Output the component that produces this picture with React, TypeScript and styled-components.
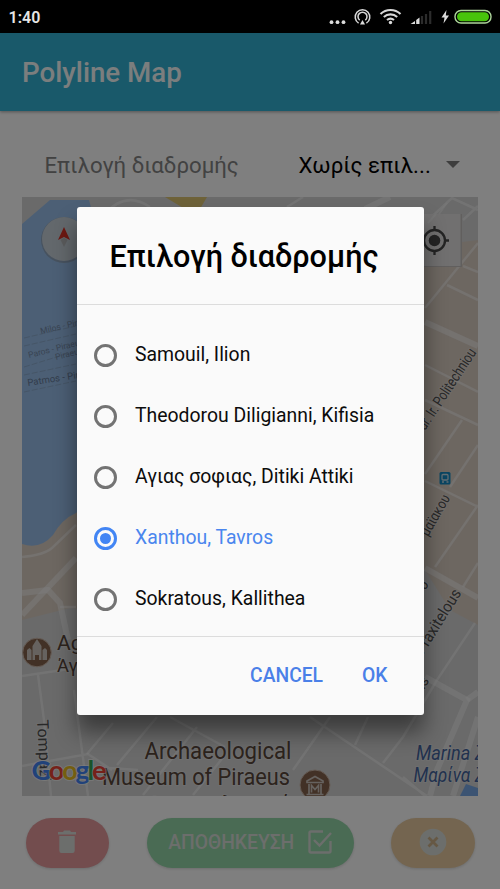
import React, { useState } from "react";
import styled, { createGlobalStyle } from "styled-components";

const GlobalStyle = createGlobalStyle`
  * { box-sizing: border-box; }
  body {
    margin: 0;
    overflow: hidden;
    font-family: Roboto, "Noto Sans", sans-serif;
    background: #fff;
  }
  button { font-family: inherit; border: 0; padding: 0; cursor: pointer; }
  svg { display: block; }
`;

const Screen = styled.div`
  position: relative;
  width: 500px;
  height: 889px;
  display: flex;
  flex-direction: column;
  overflow: hidden;
`;

const StatusBar = styled.div`
  display: flex;
  justify-content: space-between;
  height: 33px;
  flex: none;
  background: #000;
  color: #e6e6e6;
  position: relative;
  z-index: 2;
`;

const Clock = styled.span`
  padding-left: 8.5px;
  font-size: 16px;
  font-weight: 600;
  line-height: 36px;
`;

const Toolbar = styled.header`
  display: flex;
  align-items: center;
  height: 78px;
  flex: none;
  padding: 2px 0 0 22px;
  background: #32b3d5;
  box-shadow: 0 1px 3px rgba(0, 0, 0, 0.35);
`;

const Title = styled.h1`
  margin: 0;
  font-size: 27.7px;
  font-weight: 500;
  line-height: 36px;
  color: #fff;
  opacity: 0.96;
`;

const Content = styled.main`
  display: flex;
  flex-direction: column;
  padding: 0 22px;
`;

const SelectRow = styled.div`
  display: flex;
  align-items: center;
  height: 86px;
  padding: 21px 18.5px 0 22.5px;
`;

const SelectLabel = styled.span`
  flex: none;
  width: 254px;
  font-size: 22.2px;
  color: #848484;
`;

const SelectValue = styled.span`
  flex: 1;
  font-size: 22.3px;
  white-space: nowrap;
`;

const Caret = styled.i`
  border: 7px solid transparent;
  border-top-color: #7d7d7d;
  border-bottom: 0;
`;

const MapFrame = styled.div`
  width: 456px;
  height: 599px;
`;

const Actions = styled.div`
  display: flex;
  justify-content: space-between;
  padding: 22px 3px 0 3.5px;
`;

const ActionButton = styled.button<{ $tone: string; $width: number }>`
  display: flex;
  align-items: center;
  justify-content: center;
  gap: 13px;
  width: ${(p) => p.$width}px;
  height: 50px;
  border-radius: 25px;
  background: ${(p) => p.$tone};
  box-shadow: 0 1px 3px rgba(0, 0, 0, 0.15);
  color: #d8ddd8;
  font-size: 19.3px;
  font-weight: 500;
  padding-bottom: 2px;
`;

const SaveButton = styled(ActionButton)`
  margin-left: 2px;
`;

const Backdrop = styled.div`
  position: absolute;
  inset: 33px 0 0;
  display: flex;
  justify-content: center;
  align-items: flex-start;
  padding-top: 174px;
  background: rgba(0, 0, 0, 0.5);
`;

const Dialog = styled.section`
  width: 347px;
  height: 508px;
  display: flex;
  flex-direction: column;
  border-radius: 3px;
  background: #fafafa;
  box-shadow: 0 17px 22px rgba(0, 0, 0, 0.45);
`;

const DialogTitle = styled.h2`
  margin: 0;
  height: 98px;
  padding: 0 0 0 33px;
  font-size: 30.6px;
  font-weight: 500;
  line-height: 99px;
  border-bottom: 1.5px solid #dcdcdc;
  white-space: nowrap;
`;

const Options = styled.div`
  display: flex;
  flex-direction: column;
  height: 332px;
  padding-top: 19px;
  border-bottom: 1.5px solid #dcdcdc;
`;

const Option = styled.button<{ $selected: boolean }>`
  display: flex;
  align-items: center;
  gap: 18px;
  height: 61.1px;
  padding: 0 0 0 17.5px;
  background: none;
  font-size: 19.4px;
  color: ${(p) => (p.$selected ? "#4a86ee" : "#0c0c0c")};
  white-space: nowrap;
  text-align: left;
`;

const Radio = styled.span<{ $selected: boolean }>`
  display: grid;
  place-items: center;
  width: 23px;
  height: 23px;
  margin-top: 1px;
  border: 3px solid ${(p) => (p.$selected ? "#4285f4" : "#737373")};
  border-radius: 50%;
  &::after {
    content: "";
    width: 11px;
    height: 11px;
    border-radius: 50%;
    background: ${(p) => (p.$selected ? "#4285f4" : "transparent")};
  }
`;

const DialogActions = styled.footer`
  display: flex;
  justify-content: flex-end;
  gap: 39px;
  padding: 27px 36px 0 0;
`;

const TextButton = styled.button`
  background: none;
  color: #4a80e8;
  font-size: 19.3px;
  font-weight: 500;
  line-height: 24px;
`;

const Road = styled.path<{ $w?: number }>`
  fill: none;
  stroke: #fafafa;
  stroke-opacity: 0.5;
  stroke-width: ${(p) => p.$w ?? 2.5};
`;

const MapLabel = styled.text<{ $size: number; $tone?: string; $italic?: boolean }>`
  font-size: ${(p) => p.$size}px;
  font-style: ${(p) => (p.$italic ? "italic" : "normal")};
  fill: ${(p) => p.$tone ?? "#505050"};
  paint-order: stroke;
  stroke: rgba(245, 245, 245, 0.3);
  stroke-width: 2px;
`;

const LogoText = styled.text`
  font-family: Lato, sans-serif;
  font-weight: 700;
  font-size: 27px;
  paint-order: stroke;
  stroke: #fff;
  stroke-opacity: 0.6;
  stroke-width: 2px;
`;

const FINE_ROADS = [
  "M425 223L452 198L478 210M463 220L478 206M425 308L478 243M463 266L478 272M447 285L478 300M425 365L478 392M425 400L478 425M425 474L462 420M450 487L478 445M425 481L478 507M435 567L478 505M463 587L478 563",
  "M437 680L475 623M437 680L403 737L383 763M368 717L355 745M293 770L330 717M193 795L225 755M170 717L225 747M143 795L197 727M117 765L157 717M87 754L113 723M310 717L427 796M403 777L425 796",
  "M22 676L76 668M38 675L44 720L51 796M74 690L88 796M22 766L55 760L88 754L112 770M60 607H76M22 557Q44 555 52 548L76 525M110 768L138 770M104 215Q125 190 150 207M287 207L303 197",
];

const WIDE_ROADS = [
  "M22 615L76 558",
  "M22 593L48 590L60 603L68 640",
  "M425 322L478 346",
  "M425 568L478 598",
  "M425 677L467 700L437 770L430 796",
  "M478 692L467 700",
  "M478 717L453 796",
  "M365 209L390 197",
];

function Map() {
  return (
    <svg width="456" height="599" viewBox="22 197 456 599" role="img" aria-label="Map">
      <rect x="22" y="197" width="456" height="599" fill="#d4d4d4" />
      <path d="M22 500H180V620L70 608L22 620ZM400 250L478 240V625L450 610L425 570H400Z" fill="#dacec3" />
      <path d="M22 224L50 200H89L100 240V490L76 513Q62 519 53 535Q40 550 22 544Z" fill="#98bfeb" />
      <path d="M165 197H207L200 209H185Z" fill="#dcc473" />
      <path d="M460 796L466 784L478 788V796Z" fill="#79a9e6" />
      {FINE_ROADS.map((d) => <Road key={d} d={d} />)}
      {WIDE_ROADS.map((d) => <Road key={d} d={d} $w={6} />)}
      <g stroke="#8298b2" strokeWidth="1" strokeDasharray="6 2" opacity=".5">
        <path d="M24 338L76 326M24 346L76 334M24 367L76 351M24 375L76 364M24 392L76 381" />
      </g>
      <g fill="#7388a6" fontSize="8.5">
        <text transform="translate(41 334) rotate(-13)">Milos - Piraeus</text>
        <text transform="translate(29 358) rotate(-14)">Paros - Piraeus</text>
        <text transform="translate(56 360) rotate(-14)">Piraeus</text>
        <text transform="translate(28 386) rotate(-9)" fontSize="9.5" fill="#667a98">Patmos - Piraeus</text>
      </g>
      <circle cx="64" cy="240" r="23" fill="#8894a0" opacity=".6" />
      <circle cx="64" cy="239" r="22" fill="#c6d0d9" />
      <path d="M64 227L58 240L64 237L70 240Z" fill="#d93025" />
      <path d="M60.500 240L64 237.500L67.500 240L64 247Z" fill="#b5b7b8" />
      <rect x="407" y="214" width="55" height="53" fill="#c2bfbc" />
      <rect x="407" y="214" width="53.500" height="52" fill="#e2e1e0" />
      <path d="M439 214L447 203M428 223L436 214" stroke="#f4f4f4" strokeWidth="2" opacity=".5" />
      <g stroke="#484848" strokeWidth="2.300" fill="none">
        <circle cx="434.500" cy="240.500" r="10.500" />
        <path d="M434.500 226V231M434.500 250V255M420 240.500H425M444 240.500H449" />
        <circle cx="434.500" cy="240.500" r="5.800" fill="#484848" stroke="none" />
      </g>
      <MapLabel $size={15} transform="translate(425 431) rotate(-56.500)" textLength="94" lengthAdjust="spacingAndGlyphs">ur. Ir. Politechniou</MapLabel>
      <MapLabel $size={14.5} transform="translate(428 537) rotate(-60)" textLength="45" lengthAdjust="spacingAndGlyphs">μαϊακου</MapLabel>
      <MapLabel $size={14.5} transform="translate(421 598) rotate(-60)">ου</MapLabel>
      <MapLabel $size={16} transform="translate(423 655) rotate(-58)" textLength="73" lengthAdjust="spacingAndGlyphs">Praxitelous</MapLabel>
      <MapLabel $size={14.5} transform="translate(424 690) rotate(-60)">is</MapLabel>
      <MapLabel $size={16} transform="translate(37 720) rotate(87)">Tompazi</MapLabel>
      <rect x="439.500" y="472" width="11" height="12.500" rx="1.500" fill="#148bc4" />
      <rect x="442" y="474.500" width="6" height="5.500" rx="1" fill="none" stroke="#c6dde8" strokeWidth="1.300" />
      <path d="M442 482H444M446.500 482H448.500" stroke="#c6dde8" strokeWidth="1.300" />
      <circle cx="37" cy="652.500" r="14.300" fill="#85624c" stroke="#cbb8aa" />
      <path d="M27 660V650L29.500 648L31.500 650V660ZM32.500 660V646L37 639L41.500 646V660H39V655H35V660ZM42.500 660V650L45 648L47 650V660Z" fill="#ccc5be" />
      <MapLabel $size={21} $tone="#58463b" x="57" y="650">Agia</MapLabel>
      <MapLabel $size={19} $tone="#58463b" x="57" y="672" textLength="37" lengthAdjust="spacingAndGlyphs">Άγια</MapLabel>
      <MapLabel $size={23.5} $tone="#58463b" x="144.500" y="758.500" textLength="147" lengthAdjust="spacingAndGlyphs">Archaeological</MapLabel>
      <MapLabel $size={23.5} $tone="#58463b" x="102" y="784.500" textLength="188" lengthAdjust="spacingAndGlyphs">Museum of Piraeus</MapLabel>
      <MapLabel $size={23} $tone="#58463b" x="147" y="812.500">Αρχαιολογικό</MapLabel>
      <circle cx="315" cy="785" r="15" fill="#85624c" stroke="#cbb8aa" />
      <path d="M307 782.500V781L315 776.500L323 781V782.500ZM309 784V794M321 784V794M306.500 794.500H323.500" fill="none" stroke="#ccc5be" strokeWidth="1.700" />
      <path d="M311.500 792.500V785.500L315 789.500L318.500 785.500V792.500" fill="none" stroke="#ccc5be" strokeWidth="1.600" />
      <MapLabel $size={19.5} $tone="#43639c" $italic x="416" y="760" textLength="97" lengthAdjust="spacingAndGlyphs">Marina Zeas</MapLabel>
      <MapLabel $size={19.5} $tone="#43639c" $italic x="413.500" y="782" textLength="99" lengthAdjust="spacingAndGlyphs">Μαρίνα Ζέας</MapLabel>
      <LogoText x="31.500" y="780" textLength="75">
        <tspan fill="#4285f4">G</tspan><tspan fill="#ea4335">o</tspan><tspan fill="#e8bd20">o</tspan>
        <tspan fill="#4285f4">g</tspan><tspan fill="#34a853">l</tspan><tspan fill="#ea4335">e</tspan>
      </LogoText>
    </svg>
  );
}

function StatusIcons() {
  return (
    <svg width="172" height="33" viewBox="328 0 172 33" fill="none" stroke="#d8d8d8">
      <g fill="#dcdcdc" stroke="none">
        <circle cx="331.500" cy="22.200" r="1.900" /><circle cx="337.500" cy="22.200" r="1.900" /><circle cx="343.500" cy="22.200" r="1.900" />
        <path d="M362.500 20L365 24.500H360Z" />
        <circle cx="390.500" cy="22.500" r="1.700" />
        <path d="M410.500 24L415 21V24ZM416.200 24V20L419.500 17.500V24Z" />
        <path d="M446.500 10L441.500 17.500H444.500L443.500 23.500L449 15.500H445.800Z" />
      </g>
      <path d="M358.600 23.200A7.300 7.300 0 1 1 366.400 23.200M359.700 20.200A4.500 4.500 0 1 1 365.300 20.200" strokeWidth="1.500" />
      <path d="M380.500 14A14.500 14.500 0 0 1 400.500 14M383.800 17A10 10 0 0 1 397.200 17M387 20A5.500 5.500 0 0 1 394 20" strokeWidth="2.100" />
      <path d="M422 24V16M426 24V14M430.200 24V11" stroke="#2c2c2c" strokeWidth="2.200" />
      <rect x="455" y="10.500" width="36" height="12.500" rx="6" stroke="#aed69c" strokeWidth="1.400" />
      <rect x="457" y="12.300" width="32" height="9" rx="4.500" fill="#48c40c" stroke="none" />
    </svg>
  );
}

const OPTIONS = [
  "Samouil, Ilion",
  "Theodorou Diligianni, Kifisia",
  "Αγιας σοφιας, Ditiki Attiki",
  "Xanthou, Tavros",
  "Sokratous, Kallithea",
];

export default function App() {
  const [selected, setSelected] = useState(3);
  return (
    <Screen>
      <GlobalStyle />
      <StatusBar>
        <Clock>1:40</Clock>
        <StatusIcons />
      </StatusBar>
      <Toolbar><Title>Polyline Map</Title></Toolbar>
      <Content>
        <SelectRow>
          <SelectLabel>Επιλογή διαδρομής</SelectLabel>
          <SelectValue>Χωρίς επιλ...</SelectValue>
          <Caret />
        </SelectRow>
        <MapFrame><Map /></MapFrame>
        <Actions>
          <ActionButton $tone="#e69a9d" $width={83} aria-label="Delete">
            <svg width="20" height="24" viewBox="0 0 20 24" fill="#d8ddd8">
              <path d="M1 2H6L7 .5H13L14 2H19V4.500H1ZM2.300 6H17.700V20.500Q17.700 23 15.500 23H4.500Q2.300 23 2.300 20.500Z" />
            </svg>
          </ActionButton>
          <SaveButton $tone="#94d6a8" $width={207}>
            ΑΠΟΘΗΚΕΥΣΗ
            <svg width="26" height="26" viewBox="0 0 26 26" fill="none" stroke="#d8ddd8" strokeWidth="2.400">
              <path d="M16 2.500H4Q2.500 2.500 2.500 4V22Q2.500 23.500 4 23.500H22Q23.500 23.500 23.500 22V12M7 11L12.500 16.500L24 4" />
            </svg>
          </SaveButton>
          <ActionButton $tone="#e8cba0" $width={84} aria-label="Clear">
            <svg width="28" height="28" viewBox="0 0 28 28">
              <circle cx="14" cy="14" r="13.300" fill="#d8ddd8" />
              <path d="M9.500 9.500L18.500 18.500M18.500 9.500L9.500 18.500" stroke="#cdb088" strokeWidth="2.800" />
            </svg>
          </ActionButton>
        </Actions>
      </Content>
      <Backdrop>
        <Dialog role="dialog" aria-modal="true">
          <DialogTitle>Επιλογή διαδρομής</DialogTitle>
          <Options>
            {OPTIONS.map((name, i) => (
              <Option key={name} $selected={i === selected} onClick={() => setSelected(i)}>
                <Radio $selected={i === selected} />
                {name}
              </Option>
            ))}
          </Options>
          <DialogActions>
            <TextButton>CANCEL</TextButton>
            <TextButton>OK</TextButton>
          </DialogActions>
        </Dialog>
      </Backdrop>
    </Screen>
  );
}
